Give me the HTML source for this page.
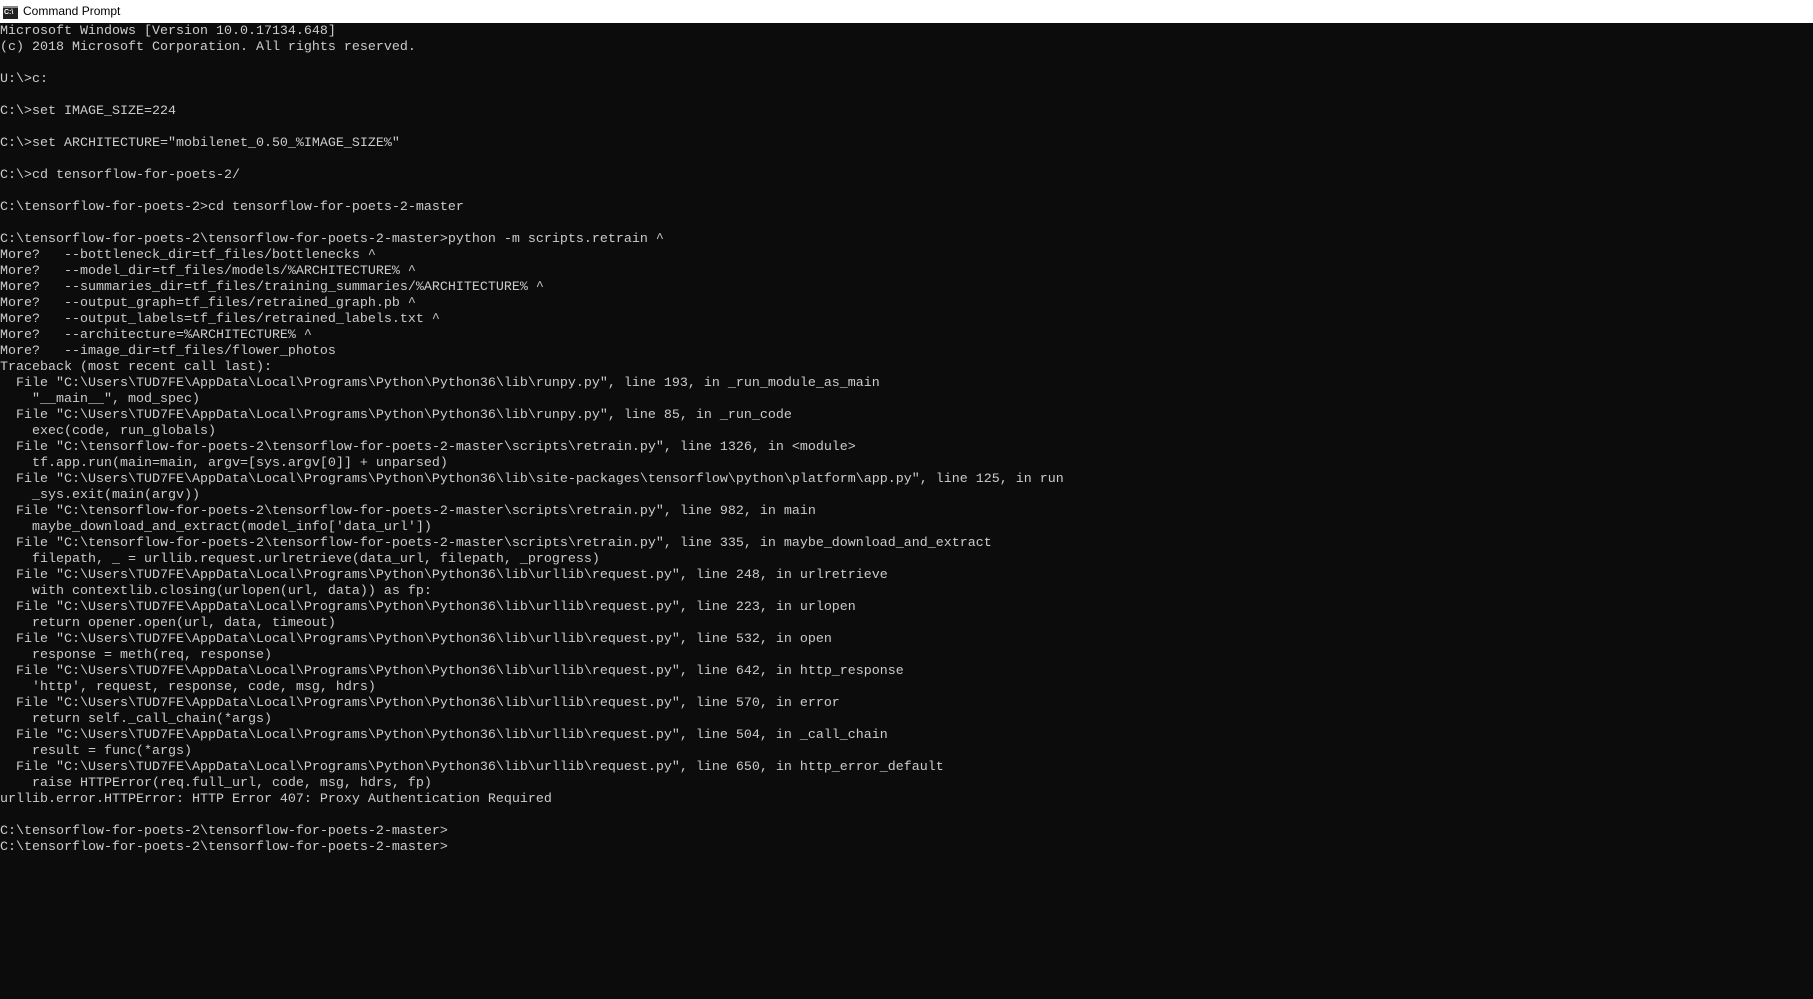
<!DOCTYPE html>
<html><head><style>
html,body{margin:0;padding:0;width:1813px;height:999px;overflow:hidden;background:#0c0c0c}
.tb{position:absolute;left:0;top:0;width:1813px;height:23px;background:#fff}
.ic{position:absolute;left:3px;top:6px;width:15px;height:11px;background:#222;border-top:2px solid #888}
.ic span{position:absolute;left:1px;top:0;font:bold 7px "Liberation Sans",sans-serif;color:#fff;line-height:9px}
.tt{position:absolute;left:23px;top:4px;font:12px "Liberation Sans",sans-serif;color:#000}
pre{position:absolute;left:0;top:24px;margin:0;font-family:"Liberation Mono",monospace;font-size:13.33px;line-height:16px;color:#cccccc}
</style></head><body>
<div class="tb"><div class="ic"><span>C:\</span></div><div class="tt">Command Prompt</div></div>
<pre>Microsoft Windows [Version 10.0.17134.648]
(c) 2018 Microsoft Corporation. All rights reserved.

U:\&gt;c:

C:\&gt;set IMAGE_SIZE=224

C:\&gt;set ARCHITECTURE="mobilenet_0.50_%IMAGE_SIZE%"

C:\&gt;cd tensorflow-for-poets-2/

C:\tensorflow-for-poets-2&gt;cd tensorflow-for-poets-2-master

C:\tensorflow-for-poets-2\tensorflow-for-poets-2-master&gt;python -m scripts.retrain ^
More?   --bottleneck_dir=tf_files/bottlenecks ^
More?   --model_dir=tf_files/models/%ARCHITECTURE% ^
More?   --summaries_dir=tf_files/training_summaries/%ARCHITECTURE% ^
More?   --output_graph=tf_files/retrained_graph.pb ^
More?   --output_labels=tf_files/retrained_labels.txt ^
More?   --architecture=%ARCHITECTURE% ^
More?   --image_dir=tf_files/flower_photos
Traceback (most recent call last):
  File "C:\Users\TUD7FE\AppData\Local\Programs\Python\Python36\lib\runpy.py", line 193, in _run_module_as_main
    "__main__", mod_spec)
  File "C:\Users\TUD7FE\AppData\Local\Programs\Python\Python36\lib\runpy.py", line 85, in _run_code
    exec(code, run_globals)
  File "C:\tensorflow-for-poets-2\tensorflow-for-poets-2-master\scripts\retrain.py", line 1326, in &lt;module&gt;
    tf.app.run(main=main, argv=[sys.argv[0]] + unparsed)
  File "C:\Users\TUD7FE\AppData\Local\Programs\Python\Python36\lib\site-packages\tensorflow\python\platform\app.py", line 125, in run
    _sys.exit(main(argv))
  File "C:\tensorflow-for-poets-2\tensorflow-for-poets-2-master\scripts\retrain.py", line 982, in main
    maybe_download_and_extract(model_info['data_url'])
  File "C:\tensorflow-for-poets-2\tensorflow-for-poets-2-master\scripts\retrain.py", line 335, in maybe_download_and_extract
    filepath, _ = urllib.request.urlretrieve(data_url, filepath, _progress)
  File "C:\Users\TUD7FE\AppData\Local\Programs\Python\Python36\lib\urllib\request.py", line 248, in urlretrieve
    with contextlib.closing(urlopen(url, data)) as fp:
  File "C:\Users\TUD7FE\AppData\Local\Programs\Python\Python36\lib\urllib\request.py", line 223, in urlopen
    return opener.open(url, data, timeout)
  File "C:\Users\TUD7FE\AppData\Local\Programs\Python\Python36\lib\urllib\request.py", line 532, in open
    response = meth(req, response)
  File "C:\Users\TUD7FE\AppData\Local\Programs\Python\Python36\lib\urllib\request.py", line 642, in http_response
    'http', request, response, code, msg, hdrs)
  File "C:\Users\TUD7FE\AppData\Local\Programs\Python\Python36\lib\urllib\request.py", line 570, in error
    return self._call_chain(*args)
  File "C:\Users\TUD7FE\AppData\Local\Programs\Python\Python36\lib\urllib\request.py", line 504, in _call_chain
    result = func(*args)
  File "C:\Users\TUD7FE\AppData\Local\Programs\Python\Python36\lib\urllib\request.py", line 650, in http_error_default
    raise HTTPError(req.full_url, code, msg, hdrs, fp)
urllib.error.HTTPError: HTTP Error 407: Proxy Authentication Required

C:\tensorflow-for-poets-2\tensorflow-for-poets-2-master&gt;
C:\tensorflow-for-poets-2\tensorflow-for-poets-2-master&gt;</pre>
</body></html>
